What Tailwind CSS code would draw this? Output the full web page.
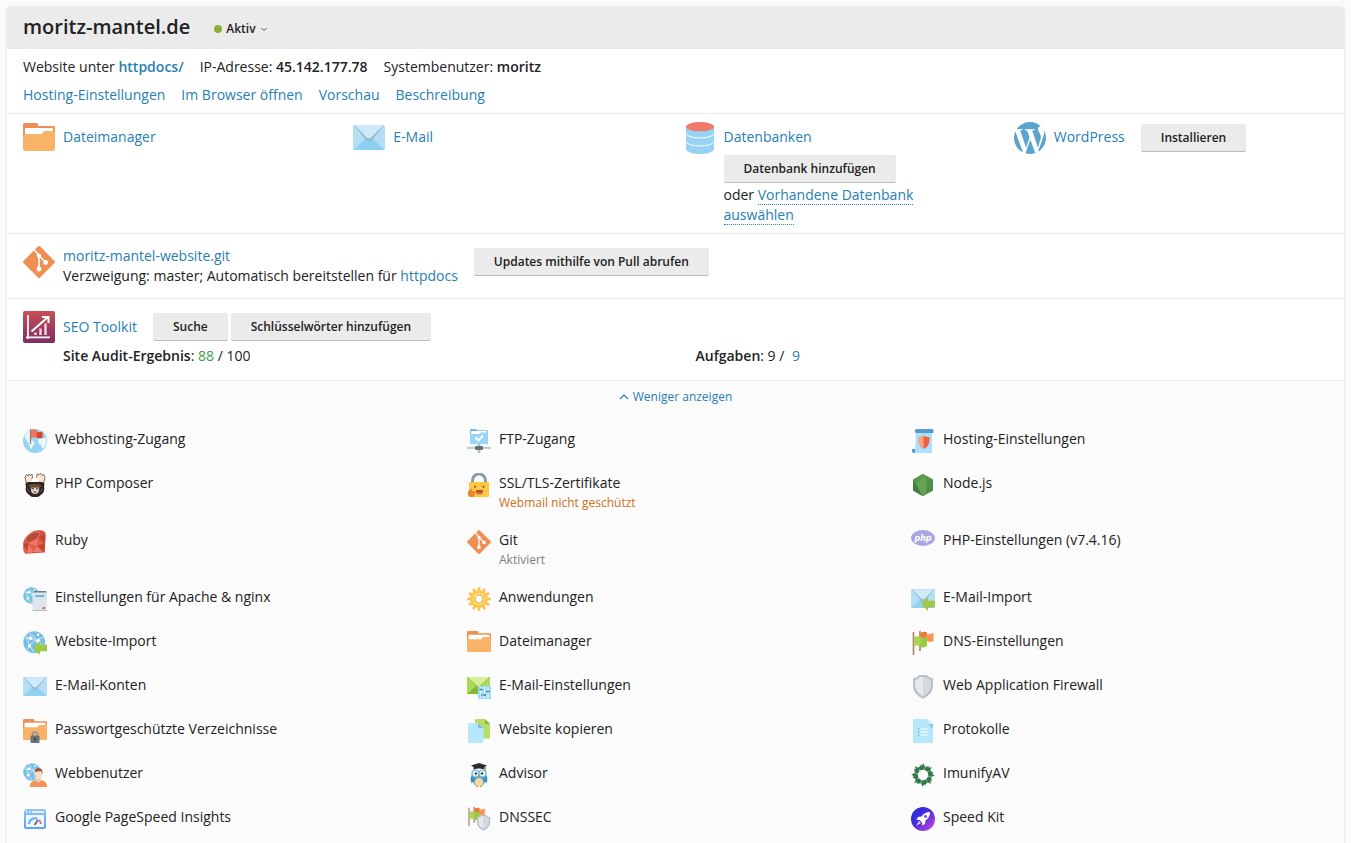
<!DOCTYPE html>
<html lang="de">
<head>
<meta charset="utf-8">
<meta name="viewport" content="width=device-width, initial-scale=1">
<title>moritz-mantel.de</title>
<script src="https://cdn.jsdelivr.net/npm/@tailwindcss/browser@4"></script>
</head>
<body class="bg-[#fbfbfb] font-['Open_Sans',sans-serif] text-sm leading-5 text-[#222]">
<svg width="0" height="0" class="absolute" aria-hidden="true">
  <defs>
    <linearGradient id="g-seo" x1="0" y1="0" x2="0" y2="1"><stop offset="0" stop-color="#c94f55"/><stop offset="1" stop-color="#7d2d62"/></linearGradient>
    <linearGradient id="g-speed" x1="0" y1="0" x2="1" y2="1"><stop offset="0" stop-color="#1b2ae0"/><stop offset=".45" stop-color="#4a2ed8"/><stop offset="1" stop-color="#cf46e6"/></linearGradient>
    <linearGradient id="g-win" x1="0" y1="0" x2="0" y2="1"><stop offset="0" stop-color="#8fc3fa"/><stop offset="1" stop-color="#5f9ff2"/></linearGradient>
    <linearGradient id="g-node" x1="0" y1="0" x2="1" y2="1"><stop offset="0" stop-color="#4a8243"/><stop offset=".5" stop-color="#6fae59"/><stop offset="1" stop-color="#4c8a48"/></linearGradient>
  </defs>
  <symbol id="folder" viewBox="0 2 32 32">
    <path d="M0 3.500Q0 2 1.500 2H13.500Q15 2 15 3.500V5H30.500Q32 5 32 6.500V16H0Z" fill="#ee8f55"/>
    <path d="M2 8Q2 7 3 7H29Q30 7 30 8V15H2Z" fill="#fff"/>
    <path d="M0 14.500Q0 13 1.500 13H18Q19 13 19.700 12L20.500 10.800Q21 10 22 10H30.500Q32 10 32 11.500V28Q32 30 30 30H2Q0 30 0 28Z" fill="#f8b367"/>
  </symbol>
  <symbol id="mail" viewBox="0 1 32 32">
    <rect y="4" width="32" height="25" rx="1.500" fill="#b3def5"/>
    <path d="M1 28.500L13 17H19L31 28.500Q31 29 30 29H2Q1 29 1 28.500Z" fill="#8fd0f0"/>
    <path d="M1 4L13.500 19.500Q16 21 18.500 19.500L31 4Z" fill="#93b9cd"/>
    <path d="M1.500 4H30.500L18.300 16.500Q16 18.300 13.700 16.500Z" fill="#cdeafb"/>
  </symbol>
  <symbol id="database" viewBox="0 0 32 32">
    <path d="M2 5V27C2 29.800 8 32 16 32S30 29.800 30 27V5Z" fill="#96d3f3"/>
    <path d="M2 11.500C4 17.500 28 17.500 30 11.500M2 19.500C4 25.500 28 25.500 30 19.500" fill="none" stroke="#fff" stroke-width="1"/>
    <ellipse cx="16" cy="4.700" rx="14" ry="4.600" fill="#f07866"/>
  </symbol>
  <symbol id="wordpress" viewBox="43 43 426 426">
    <path fill="#5ba5cd" d="M61.700 169.400l101.500 278C92.200 413 43.300 340.200 43.300 256c0-30.900 6.600-60.100 18.400-86.600zm337.900 75.900c0-26.300-9.400-44.500-17.500-58.700-10.800-17.500-20.900-32.400-20.900-49.900 0-19.600 14.800-37.800 35.700-37.800.9 0 1.800.1 2.800.2-37.900-34.700-88.300-55.900-143.700-55.900-74.300 0-139.700 38.100-177.800 95.900 5 .2 9.700.3 13.700.3 22.200 0 56.700-2.700 56.700-2.700 11.500-.7 12.800 16.200 1.400 17.500 0 0-11.500 1.300-24.300 2l77.500 230.400L249.800 247l-33.100-90.800c-11.500-.7-22.300-2-22.300-2-11.500-.7-10.100-18.200 1.300-17.500 0 0 35.100 2.700 56 2.700 22.200 0 56.700-2.700 56.700-2.700 11.500-.7 12.800 16.200 1.400 17.500 0 0-11.500 1.300-24.300 2l76.900 228.700 21.200-70.900c9-29.400 16-50.500 16-68.700zm-139.900 29.300l-63.800 185.500c19.100 5.600 39.200 8.700 60.100 8.700 24.800 0 48.500-4.300 70.600-12.100-.6-.9-1.100-1.900-1.500-2.900l-65.400-179.200zm183-120.700c.9 6.800 1.400 14 1.400 21.900 0 21.600-4 45.800-16.200 76.200l-65 187.900C426.200 403 468.700 334.500 468.700 256c0-37-9.400-71.800-26-102.100z"/>
  </symbol>
  <symbol id="git" viewBox="0 0 32 32">
    <path d="M14.900.5Q16-.5 17.100.5L31.500 14.900Q32.500 16 31.500 17.100L17.100 31.500Q16 32.500 14.900 31.500L.5 17.100Q-.5 16 .5 14.900Z" fill="#ef8f53"/>
    <path d="M11.500 4L16 9.500V23M16 9.500L22.500 16.500" fill="none" stroke="#fff" stroke-width="1.600"/>
    <circle cx="16" cy="9.800" r="2.200" fill="#fff"/><circle cx="16" cy="23" r="2.400" fill="#fff"/><circle cx="22.700" cy="16.500" r="2.400" fill="#fff"/>
  </symbol>
  <symbol id="seo" viewBox="0 0 32 32">
    <rect width="32" height="32" rx="2" fill="url(#g-seo)"/>
    <path d="M5 4V28M3 26.300H27" fill="none" stroke="#fff" stroke-width="1.700"/>
    <path d="M8.500 20.500L24.500 6.500M19 6H25.500V12" fill="none" stroke="#fff" stroke-width="2"/>
    <path d="M12.500 24V21.500M17.500 24V17.500M22.500 24V12.500" stroke="#f3d8e2" stroke-width="2.400"/>
  </symbol>
  <symbol id="globe" viewBox="0 0 24 24">
    <circle cx="12" cy="12" r="12" fill="#97d3f3"/>
    <path d="M1.500 6.500Q3.500 3 7.500 1.200L8 5Q9 7 7 8L6.500 10L8.500 11.500Q12 12 11.500 14.500Q9.500 17 8.500 20Q7 20 6.500 17L5 13Q2.500 11 1.500 6.500ZM15 10.500Q18 8.500 22.800 8.800Q24 12 23 15L20.500 19.500Q18.500 20 18.500 16.500L15.500 14.500Z" fill="#eaf7fd"/>
  </symbol>
  <symbol id="webhosting" viewBox="0 0 24 24">
    <use href="#globe" width="24" height="24"/>
    <path d="M7.500 0V15" stroke="#a07a61" stroke-width="1.200"/>
    <path d="M8 .8Q11-.5 14 .8L14.500 9Q11 7.500 8 9Z" fill="#f4735f"/><path d="M14 3Q17 3.500 19.500 2.500V9Q16 10 13.500 8.300Z" fill="#dd4327"/>
  </symbol>
  <symbol id="net" viewBox="0 0 24 24">
    <circle cx="12" cy="12" r="11.700" fill="#79bfe5"/>
    <path d="M2 8Q10 6 21 15M7 2Q16 8 17 23M22 7Q11 8 4 20M4 5Q5 15 12 23" fill="none" stroke="#d3eefb" stroke-width="1"/>
    <circle cx="8" cy="7.500" r="2" fill="#fff"/><circle cx="16.500" cy="10.500" r="2" fill="#fff"/><circle cx="7" cy="16" r="1.700" fill="#fff"/><circle cx="16" cy="4" r="1.300" fill="#fff"/>
  </symbol>
  <symbol id="composer" viewBox="0 0 24 24">
    <path d="M3.500 11L2 4.500L3.500 1.500L5 3L6 1L7.500 2.500L9 1L9.500 4L8.500 9ZM20.500 11L22 4.500L20.500 1L19 2.500L17.500 .3L16 1.800L14.500 .8L13.500 3L15 8Z" fill="#f6e4d0" stroke="#4a3d36" stroke-width=".7"/>
    <path d="M9 5.500L12 6.500L15 4L16.500 9.500H7.500Z" fill="#fff"/>
    <path d="M2.500 11Q3 9 6 9H18Q21 9 21.500 11L21 14Q22 17 20 20L16 23.500Q12 24.500 8 23.500L4 20Q2 17 3 14Z" fill="#2b2421"/>
    <path d="M5 12Q12 9.500 19 12L18 14H6Z" fill="#65472c"/>
    <path d="M7.500 14.500H16.500L15.500 19.500Q12 22.500 8.500 19.500Z" fill="#e5d5c8"/>
    <path d="M8.500 15.800H11M13 15.800H15.500M10.500 19H13.500" stroke="#3b2c25" stroke-width="1"/>
    <path d="M4.500 15.500L6.500 19M19.500 15.500L17.500 19" stroke="#736153" stroke-width="1"/>
  </symbol>
  <symbol id="ruby" viewBox="0 0 24 24">
    <path d="M.2 14Q0 9.500 5.500 4.500T17.500 .3Q23 1 22.500 5L21.500 22.500L3 23.700Q.2 22.500.2 18Z" fill="#d4523c"/>
    <path d="M2.500 11Q2 8 6.500 4.500T16 2Q18 3 15 7T6 12.500Q3 13 2.500 11Z" fill="#ba4a38" stroke="#ee907c" stroke-width=".6"/>
    <path d="M6 13.500L15.500 8L14 16L21 22.500L10 22L5 23.500L1 20Z" fill="#ed7864"/>
    <path d="M17 6L22.500 5L21.500 22.500L14 16Z" fill="#c6432f"/><path d="M6 13.500L14 16L10 22ZM15.500 8L21.500 13L14 16Z" fill="#e0604c"/>
    <path d="M.5 14L6 13.500L4 22Z" fill="#c6432f"/>
  </symbol>
  <symbol id="apache" viewBox="0 0 24 24">
    <use href="#net" width="17" height="17"/>
    <rect x="9.500" y="4" width="14.500" height="20" fill="#dde6ea"/><path d="M9.500 5.500L11 4H22.500L24 5.500Z" fill="#6f7d86"/>
    <rect x="12" y="8" width="9.500" height="2" rx=".8" fill="#6fb6dd"/><rect x="19.500" y="20" width="2.500" height="2" fill="#ee5b43"/><path d="M9.500 23.500H24" stroke="#b1bdc4"/>
  </symbol>
  <symbol id="arrow" viewBox="0 0 24 24"><path d="M10 17L17 10V13.800H24V20.200H17V24Z" fill="#9fca48"/></symbol>
  <symbol id="webimport" viewBox="0 0 24 24"><use href="#net" width="22.500" height="22.500"/><use href="#arrow" width="24" height="24"/></symbol>
  <symbol id="mailimport" viewBox="0 0 24 24"><use href="#mail" width="24" height="24"/><use href="#arrow" width="24" height="24"/></symbol>
  <symbol id="protected" viewBox="0 0 24 24">
    <use href="#folder" width="24" height="24"/>
    <path d="M9.500 17V15.500a2.500 2.500 0 0 1 5 0V17" fill="none" stroke="#8a959b" stroke-width="1.500"/>
    <rect x="7.500" y="16.500" width="9" height="7.500" rx="1" fill="#6e7578"/><path d="M12 18.500V21.500" stroke="#394044" stroke-width="1.700"/>
  </symbol>
  <symbol id="webuser" viewBox="0 0 24 24">
    <use href="#net" width="18" height="18"/>
    <path d="M7 24Q7 17 13 17.500H18Q24 17 24 24Z" fill="#f59259"/><path d="M13 14H18V18Q15.500 21 13 18Z" fill="#efc9ae"/>
    <path d="M11.500 9Q12 5 15.500 5T19.500 9L18.500 14.500Q15.500 18 12.500 14.500Z" fill="#f8dac4"/><path d="M11.500 9Q11.500 5 15.500 5Q20 5 19.500 11Q18.500 9.500 18 8Q14 8.500 11.500 9Z" fill="#97563c"/>
  </symbol>
  <symbol id="pagespeed" viewBox="0 0 24 24">
    <path d="M2 3.500Q2 2 3.500 2H20.500Q23 2 23 4.500V20Q23 22 21 22H3Q1 22 1 20V5Q1 3.500 2 3.500Z" fill="url(#g-win)"/>
    <rect x="3" y="8" width="18" height="12" fill="#edf7ff"/><path d="M3 5H4.500M6 5H7.500M9 5H21" stroke="#fff" stroke-width="1.400"/>
    <path d="M6 17A6 6 0 0 1 14.500 11.800" fill="none" stroke="#6baaf5" stroke-width="2"/><path d="M16 13A6 6 0 0 1 18 17" fill="none" stroke="#e07378" stroke-width="2"/><path d="M11.500 18L15 13" stroke="#56667c" stroke-width="1.700"/>
  </symbol>
  <symbol id="ftp" viewBox="0 0 24 24">
    <path d="M3 1Q3 0 4 0H9Q10 0 10 1.200H20Q21 1.200 21 2.200V14Q21 15 20 15H4Q3 15 3 14Z" fill="#72b9e0"/>
    <path d="M4 2H20V5H4Z" fill="#fff"/><path d="M3 5H12L13.500 3.500H21V14Q21 15 20 15H4Q3 15 3 14Z" fill="#99d6f6"/>
    <path d="M8.500 8.500L11.500 11.500L16 6.500" fill="none" stroke="#fff" stroke-width="1.900"/>
    <path d="M12 15V24" stroke="#aeb9c1" stroke-width="2.500"/><path d="M0 18.900H24" stroke="#bdc8ce" stroke-width="2"/><rect x="8" y="17" width="8" height="4" rx="1" fill="#607581"/>
  </symbol>
  <symbol id="lock" viewBox="0 0 24 24">
    <path d="M5.500 10V7.500a6.500 6.500 0 0 1 13 0V10" fill="none" stroke="#899ba6" stroke-width="3"/>
    <path d="M2 9H22V23Q22 24 21 24H3Q2 24 2 23Z" fill="#fcc744"/>
    <circle cx="8" cy="13.700" r="1" fill="#7c4a27"/><circle cx="16.500" cy="13.700" r="1" fill="#7c4a27"/><path d="M9 17H16Q16 21.500 12.500 21.500T9 17Z" fill="#b04f34"/><path d="M10 20Q12.500 18.500 15 20Q12.500 22 10 20Z" fill="#ee705a"/>
    <path d="M1 18Q2 18 4 15.500Q5.500 16 5 18H8Q9 19 8 20Q8.500 21 7.500 22Q7.500 24 5.500 24H2.500Q0 22 1 18Z" fill="#e78b2c"/>
  </symbol>
  <symbol id="gear" viewBox="0 0 24 24">
    <path d="M12 .3V23.700M.3 12H23.700M6.150 1.900L17.850 22.100M17.850 1.900L6.150 22.100M1.900 6.150L22.100 17.850M1.900 17.850L22.100 6.150" stroke="#fcc044" stroke-width="2.500"/>
    <circle cx="12" cy="12" r="9" fill="#fcc84f"/><circle cx="12" cy="12" r="6" fill="#fde18a"/><circle cx="12" cy="12" r="4" fill="#fff" stroke="#edac35" stroke-width="1.200"/>
  </symbol>
  <symbol id="mailset" viewBox="0 0 24 24">
    <path d="M0 2H23V19H0Z" fill="#aed95c"/><path d="M0 19L10 10H13L23 19Z" fill="#83b937"/><path d="M0 2L11.500 12L23 2Z" fill="#d5ee98"/><path d="M0 2L10 11.500Q11.500 12.500 13 11.500L23 2" fill="none" stroke="#8cbd43" stroke-width=".9"/>
    <rect x="11" y="11" width="13" height="13" rx="1" fill="#a2d9f5"/><path d="M14 12V23M17.500 12V23M21 12V23" stroke="#f7fdff" stroke-width="1"/><path d="M12.500 14.500H15.500M16 20H19M19.500 16.500H22.500M14 20H15" stroke="#2c82b1" stroke-width="1.400"/>
  </symbol>
  <symbol id="copy" viewBox="0 0 24 24">
    <path d="M8 1Q8 0 9 0H18L23 5V18Q23 19.500 22 19.500H8Z" fill="#b6dd66"/><path d="M18 0L23 5H18Z" fill="#88b93f"/>
    <path d="M1 5Q1 4 2 4H11L16.500 9V23Q16.500 24 15.500 24H2Q1 24 1 23Z" fill="#b7e7fd"/><path d="M11 4L16.500 9H11Z" fill="#83bcda"/>
  </symbol>
  <symbol id="owl" viewBox="0 0 24 24">
    <path d="M5 8Q4 19 9 23H15Q20 19 19 8Z" fill="#4aa3d1"/><path d="M5 12Q2.500 15 4.500 20L8 18ZM19 12Q21.500 15 19.500 20L16 18Z" fill="#3f8db9"/>
    <ellipse cx="12" cy="19.200" rx="4.200" ry="4.200" fill="#f9d7a4"/><path d="M9 23.500H11M13 23.500H15" stroke="#e89330" stroke-width="1.300"/>
    <circle cx="8.500" cy="10.500" r="3.500" fill="#e2f4fc" stroke="#63b5df" stroke-width="1.200"/><circle cx="15.500" cy="10.500" r="3.500" fill="#e2f4fc" stroke="#63b5df" stroke-width="1.200"/>
    <circle cx="9" cy="10.500" r="1.200" fill="#35444c"/><circle cx="15" cy="10.500" r="1.200" fill="#35444c"/><path d="M11 12.500H13L12 15.500Z" fill="#ef8b2b"/>
    <path d="M4 2.500L12 0L20 2.500L17.500 4V6.500Q12 4.500 6.500 6.500V4Z" fill="#2c2c30"/><path d="M18.700 3V8" stroke="#dd9a2b" stroke-width="1.100"/>
  </symbol>
  <symbol id="flags" viewBox="0 0 24 24">
    <path d="M9 0V20M2.500 1V24" stroke="#b08b70" stroke-width="1.700"/>
    <path d="M9.500 2Q13 0 16 1.500V9H9.500Z" fill="#ef7836"/><path d="M15.500 3Q19 3.800 22.500 1.800V10Q19 12 15.500 10Z" fill="#f9945a"/>
    <path d="M3 6Q7 4.500 10 6.500V15.500Q6 13.500 3 15.500Z" fill="#acd45b"/><path d="M10 6Q13 7 16 5.500V15Q12 17.500 9 15.500Z" fill="#97c943"/>
  </symbol>
  <symbol id="shield" viewBox="0 0 24 24">
    <path d="M2 3.500Q6 3 8 .3Q12-.4 16 .3Q18 3 22 3.500V11Q22 19 12 24Q2 19 2 11Z" fill="#b8c3c9"/>
    <path d="M4.200 5Q8 4 9 2H12V21.500Q4.200 17 4.200 10Z" fill="#e5eaee"/><path d="M12 2H15Q16 4 19.800 5V10Q19.800 17 12 21.500Z" fill="#d4dbe0"/>
  </symbol>
  <symbol id="dnssec" viewBox="0 0 24 24"><use href="#flags" x="0" y="0" width="19" height="19"/><use href="#shield" x="8.500" y="7.500" width="16" height="16.500"/></symbol>
  <symbol id="scroll" viewBox="0 0 24 24">
    <path d="M5 0H21V24H4Z" fill="#aae2fc"/><path d="M4 1.500Q4 0 5.500 0H21Q22.500 0 22.500 1.800V4H5Q4 4 4 2.500ZM1 20H4V24H3Q1 24 1 22Z" fill="#559dcb"/>
    <path d="M7 8Q10 8 12.500 6.500V20Q7 17 7 12Z" fill="#f8a188"/><path d="M12.500 6.500Q15 8 18.500 8V12Q18.500 17 12.500 20Z" fill="#ef623c"/>
  </symbol>
  <symbol id="node" viewBox="0 0 24 24">
    <path d="M12 .8L22 6.400V17.600L12 23.200L2 17.600V6.400Z" fill="url(#g-node)"/><path d="M15.500 3L22 6.400V17.600L15 21Z" fill="#4a8647" opacity=".7"/><path d="M2 6.400L12 23.200L2 17.600Z" fill="#427e42"/><path d="M15.500 3L7 15L12 23.200" fill="#65a353"/>
  </symbol>
  <symbol id="log" viewBox="0 0 24 24">
    <path d="M2 1Q2 0 3 0H17L22 5V23Q22 24 21 24H3Q2 24 2 23Z" fill="#b7e7fd"/><path d="M17 0L22 5H17Z" fill="#d7f2fe"/><path d="M17 5H22V10Z" fill="#8fc6e2"/>
    <path d="M7 10H8.500M7 13H8.500M7 16H8.500" stroke="#5ba7cf" stroke-width="1.200"/><path d="M9.500 10H16.500M9.500 13H16.500M9.500 16H16.500" stroke="#e9f9ff" stroke-width="1.300"/>
  </symbol>
  <symbol id="imunify" viewBox="0 0 24 24">
    <g fill="#31784a"><path id="im-a" d="M12.500 .3L14 3.800L18.500 3.200L15.500 7.800Q13 6 10 7L8.500 4.500Q11 3.500 12.500 .3Z"/><use href="#im-a" transform="rotate(45 12 12)"/><use href="#im-a" transform="rotate(90 12 12)"/><use href="#im-a" transform="rotate(135 12 12)"/><use href="#im-a" transform="rotate(180 12 12)"/><use href="#im-a" transform="rotate(225 12 12)"/><use href="#im-a" transform="rotate(270 12 12)"/><use href="#im-a" transform="rotate(315 12 12)"/></g>
    <path d="M14 4L13 7.500M18 8L15.500 9.500M20 14L16.500 13M16 18L14.500 15.500M10 20L11 16.500M6 16L8.500 14.500M4 10L7.500 11M8 6L9.500 8.500" stroke="#c4dfcb" stroke-width=".6"/>
  </symbol>
  <symbol id="speed" viewBox="0 0 24 24">
    <circle cx="12" cy="12" r="12" fill="url(#g-speed)"/><path d="M19 5Q13.500 5 10.500 9.500L7 10L5.500 13H8.500L11 15.500V18.500L14 17L14.500 13.500Q19 10.500 19 5Z" fill="#fff"/><circle cx="14.500" cy="9.500" r="1.400" fill="#7250e0"/><path d="M8 14L5 18.800L10 16Z" fill="#e7d5ff"/>
  </symbol>
</svg>

<main class="mx-[7px] mt-[7px] rounded-t-sm bg-white shadow-[0_0_3px_rgba(0,0,0,0.14)]">
  <header class="flex items-center gap-6 rounded-t-sm bg-[#ebebeb] px-4 pt-1.5 pb-2">
    <h1 class="text-xl leading-7 font-semibold">moritz-mantel.de</h1>
    <button type="button" class="mt-[3px] flex items-center gap-1 text-xs leading-5 font-semibold"><span class="size-2 rounded-full bg-[#8aad38]"></span>Aktiv
      <svg class="size-2" viewBox="0 0 8 8" fill="none" stroke="#555"><path d="M1.500 3L4 5.500L6.500 3"/></svg>
    </button>
  </header>

  <section class="flex flex-col gap-2 border-b border-[#ebebeb] px-4 py-2">
    <div class="flex gap-4">
      <p>Website unter <a href="#" class="font-semibold text-[#2780b1]">httpdocs/</a></p>
      <p>IP-Adresse: <b class="font-semibold">45.142.177.78</b></p>
      <p>Systembenutzer: <b class="font-semibold">moritz</b></p>
    </div>
    <nav class="flex gap-4 text-[#2780b1]"><a href="#">Hosting-Einstellungen</a><a href="#">Im Browser öffnen</a><a href="#">Vorschau</a><a href="#">Beschreibung</a></nav>
  </section>

  <section class="grid grid-cols-4 gap-4 border-b border-[#ebebeb] px-4 py-2">
    <div class="flex gap-2"><svg class="mt-px size-8 shrink-0"><use href="#folder"/></svg><a href="#" class="mt-[5px] text-[#2780b1]">Dateimanager</a></div>
    <div class="flex gap-2"><svg class="size-8 shrink-0"><use href="#mail"/></svg><a href="#" class="mt-[5px] text-[#2780b1]">E-Mail</a></div>
    <div class="flex gap-2 pr-4"><svg class="size-8 shrink-0"><use href="#database"/></svg>
      <div class="mt-[5px] flex flex-col items-start">
        <a href="#" class="text-[#2780b1]">Datenbanken</a>
        <button type="button" class="mt-2 mb-0.5 h-7 rounded-xs border-b border-[#bbb] bg-[#ebebeb] px-5 text-xs font-semibold">Datenbank hinzufügen</button>
        <p class="max-w-[200px]">oder <a href="#" class="border-b border-dotted border-[#2780b1] text-[#2780b1]">Vorhandene Datenbank auswählen</a></p>
      </div>
    </div>
    <div class="flex items-start gap-2"><svg class="size-8 shrink-0"><use href="#wordpress"/></svg><a href="#" class="mt-[5px] text-[#2780b1]">WordPress</a>
      <button type="button" class="mt-0.5 ml-2 h-7 rounded-xs border-b border-[#bbb] bg-[#ebebeb] px-5 text-xs font-semibold">Installieren</button></div>
  </section>

  <section class="flex items-start gap-2 border-b border-[#ebebeb] px-4 py-3">
    <svg class="size-8 shrink-0"><use href="#git"/></svg>
    <div><a href="#" class="block text-[#2780b1]">moritz-mantel-website.git</a><p>Verzweigung: master; Automatisch bereitstellen für <a href="#" class="text-[#2780b1]">httpdocs</a></p></div>
    <button type="button" class="mt-0.5 ml-2 h-7 rounded-xs border-b border-[#bbb] bg-[#ebebeb] px-5 text-xs font-semibold">Updates mithilfe von Pull abrufen</button>
  </section>

  <section class="border-b border-[#ebebeb] px-4 pt-3 pb-3.5">
    <div class="flex items-center gap-2">
      <svg class="size-8 shrink-0"><use href="#seo"/></svg><a href="#" class="text-[#2780b1]">SEO Toolkit</a>
      <div class="ml-2 flex gap-[3px]">
        <button type="button" class="h-7 rounded-xs border-b border-[#bbb] bg-[#ebebeb] px-5 text-xs font-semibold">Suche</button>
        <button type="button" class="h-7 rounded-xs border-b border-[#bbb] bg-[#ebebeb] px-5 text-xs font-semibold">Schlüsselwörter hinzufügen</button>
      </div>
    </div>
    <div class="mt-[3px] grid grid-cols-2 pl-10">
      <p><b class="font-semibold">Site Audit-Ergebnis</b>: <span class="text-[#43a047]">88</span> / 100</p>
      <p><b class="font-semibold">Aufgaben</b>: 9 / <a href="#" class="ml-1 text-[#2780b1]">9</a></p>
    </div>
  </section>

  <section class="bg-[#fbfbfb] px-4 pt-1.5 pb-4">
    <button type="button" class="mx-auto flex items-center gap-1 text-xs leading-5 text-[#2780b1]"><svg class="size-2.5" viewBox="0 0 10 10" fill="none" stroke="currentColor" stroke-width="1.200"><path d="M1 7L5 3L9 7"/></svg>Weniger anzeigen</button>
    <ul class="mt-[22px] grid grid-cols-3 gap-x-[27px] gap-y-[17px]">
      <li class="flex min-h-[27px] gap-2"><svg class="size-6 shrink-0"><use href="#webhosting"/></svg><a href="#">Webhosting-Zugang</a></li>
      <li class="flex min-h-[27px] gap-2"><svg class="size-6 shrink-0"><use href="#ftp"/></svg><a href="#">FTP-Zugang</a></li>
      <li class="flex min-h-[27px] gap-2"><svg class="size-6 shrink-0"><use href="#scroll"/></svg><a href="#">Hosting-Einstellungen</a></li>
      <li class="flex min-h-[27px] gap-2"><svg class="size-6 shrink-0"><use href="#composer"/></svg><a href="#">PHP Composer</a></li>
      <li class="flex min-h-[27px] gap-2"><svg class="size-6 shrink-0"><use href="#lock"/></svg><div><a href="#" class="block">SSL/TLS-Zertifikate</a><p class="text-xs leading-5 text-[#cf7020]">Webmail nicht geschützt</p></div></li>
      <li class="flex min-h-[27px] gap-2"><svg class="size-6 shrink-0"><use href="#node"/></svg><a href="#">Node.js</a></li>
      <li class="flex min-h-[27px] gap-2"><svg class="size-6 shrink-0"><use href="#ruby"/></svg><a href="#">Ruby</a></li>
      <li class="flex min-h-[27px] gap-2"><svg class="size-6 shrink-0"><use href="#git"/></svg><div><a href="#" class="block">Git</a><p class="text-xs leading-5 text-[#7f7f7f]">Aktiviert</p></div></li>
      <li class="flex min-h-[27px] gap-2"><svg class="size-6 shrink-0" viewBox="0 0 24 24"><ellipse cx="12" cy="8" rx="12" ry="7.900" fill="#a8a6e5"/><text x="12" y="10.500" text-anchor="middle" font-family="DejaVu Sans, sans-serif" font-weight="700" font-style="italic" font-size="8" fill="#fff">php</text></svg><a href="#">PHP-Einstellungen (v7.4.16)</a></li>
      <li class="flex min-h-[27px] gap-2"><svg class="size-6 shrink-0"><use href="#apache"/></svg><a href="#">Einstellungen für Apache &amp; nginx</a></li>
      <li class="flex min-h-[27px] gap-2"><svg class="size-6 shrink-0"><use href="#gear"/></svg><a href="#">Anwendungen</a></li>
      <li class="flex min-h-[27px] gap-2"><svg class="size-6 shrink-0"><use href="#mailimport"/></svg><a href="#">E-Mail-Import</a></li>
      <li class="flex min-h-[27px] gap-2"><svg class="size-6 shrink-0"><use href="#webimport"/></svg><a href="#">Website-Import</a></li>
      <li class="flex min-h-[27px] gap-2"><svg class="size-6 shrink-0"><use href="#folder"/></svg><a href="#">Dateimanager</a></li>
      <li class="flex min-h-[27px] gap-2"><svg class="size-6 shrink-0"><use href="#flags"/></svg><a href="#">DNS-Einstellungen</a></li>
      <li class="flex min-h-[27px] gap-2"><svg class="size-6 shrink-0"><use href="#mail"/></svg><a href="#">E-Mail-Konten</a></li>
      <li class="flex min-h-[27px] gap-2"><svg class="size-6 shrink-0"><use href="#mailset"/></svg><a href="#">E-Mail-Einstellungen</a></li>
      <li class="flex min-h-[27px] gap-2"><svg class="size-6 shrink-0"><use href="#shield"/></svg><a href="#">Web Application Firewall</a></li>
      <li class="flex min-h-[27px] gap-2"><svg class="size-6 shrink-0"><use href="#protected"/></svg><a href="#">Passwortgeschützte Verzeichnisse</a></li>
      <li class="flex min-h-[27px] gap-2"><svg class="size-6 shrink-0"><use href="#copy"/></svg><a href="#">Website kopieren</a></li>
      <li class="flex min-h-[27px] gap-2"><svg class="size-6 shrink-0"><use href="#log"/></svg><a href="#">Protokolle</a></li>
      <li class="flex min-h-[27px] gap-2"><svg class="size-6 shrink-0"><use href="#webuser"/></svg><a href="#">Webbenutzer</a></li>
      <li class="flex min-h-[27px] gap-2"><svg class="size-6 shrink-0"><use href="#owl"/></svg><a href="#">Advisor</a></li>
      <li class="flex min-h-[27px] gap-2"><svg class="size-6 shrink-0"><use href="#imunify"/></svg><a href="#">ImunifyAV</a></li>
      <li class="flex min-h-[27px] gap-2"><svg class="size-6 shrink-0"><use href="#pagespeed"/></svg><a href="#">Google PageSpeed Insights</a></li>
      <li class="flex min-h-[27px] gap-2"><svg class="size-6 shrink-0"><use href="#dnssec"/></svg><a href="#">DNSSEC</a></li>
      <li class="flex min-h-[27px] gap-2"><svg class="size-6 shrink-0"><use href="#speed"/></svg><a href="#">Speed Kit</a></li>
    </ul>
  </section>
</main>
</body>
</html>
